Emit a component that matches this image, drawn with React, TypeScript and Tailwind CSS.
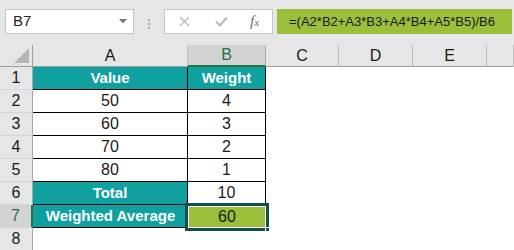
import React from 'react';

const COLS = ['A', 'B', 'C', 'D', 'E', ''];

type Cell = {
  text?: string;
  cls: string;
};

const TEAL = 'bg-[#10a0a0] text-white font-bold text-[15px]';
const PLAIN = 'bg-white text-[#1a1a1a] text-[16px]';

const rows: Cell[][] = [
  [
    { text: 'Value', cls: `${TEAL} border-r border-b border-black` },
    { text: 'Weight', cls: `${TEAL} border-r border-b border-black` },
  ],
  [
    { text: '50', cls: `${PLAIN} border-r border-b border-black` },
    { text: '4', cls: `${PLAIN} border-r border-b border-black` },
  ],
  [
    { text: '60', cls: `${PLAIN} border-r border-b border-black` },
    { text: '3', cls: `${PLAIN} border-r border-b border-black` },
  ],
  [
    { text: '70', cls: `${PLAIN} border-r border-b border-black` },
    { text: '2', cls: `${PLAIN} border-r border-b border-black` },
  ],
  [
    { text: '80', cls: `${PLAIN} border-r border-b border-black` },
    { text: '1', cls: `${PLAIN} border-r border-b border-black` },
  ],
  [
    { text: 'Total', cls: `${TEAL} border-r border-b border-black` },
    { text: '10', cls: `${PLAIN} border-r border-b border-black` },
  ],
  [
    { text: 'Weighted Average', cls: `${TEAL} border-b border-black` },
    { text: '60', cls: 'bg-[#9cbf3b] text-[#1a1a1a] text-[16px]' },
  ],
  [
    { cls: 'bg-white' },
    { cls: 'bg-white' },
  ],
];

function FormulaBar() {
  return (
    <div className="flex h-[45px] items-start bg-[#e6e6e6] pt-[9px]">
      <div className="ml-[5px] flex h-[25px] w-[129px] items-center justify-between border border-[#c6c6c6] bg-white pl-[7px] pr-[6px]">
        <span className="text-[15px] text-[#222]">B7</span>
        <svg width="8" height="5" viewBox="0 0 8 5">
          <path d="M0 0 L8 0 L4 4.5 Z" fill="#767676" />
        </svg>
      </div>
      <div className="ml-[14px] mt-[10px] flex flex-col gap-[2px]">
        <span className="h-[2px] w-[2px] bg-[#a8a8a8]" />
        <span className="h-[2px] w-[2px] bg-[#a8a8a8]" />
        <span className="h-[2px] w-[2px] bg-[#a8a8a8]" />
      </div>
      <div className="ml-[14px] flex h-[25px] w-[109px] items-center border border-[#c6c6c6] bg-white">
        <svg className="ml-[14px]" width="11" height="11" viewBox="0 0 11 11">
          <path d="M1 1 L10 10 M10 1 L1 10" stroke="#b8b8b8" strokeWidth="1.4" fill="none" />
        </svg>
        <svg className="ml-[25px]" width="13" height="11" viewBox="0 0 13 11">
          <path d="M1 5.5 L4.8 9.5 L12 1.5" stroke="#b8b8b8" strokeWidth="2" fill="none" />
        </svg>
        <span className="ml-[22px] font-['Liberation_Serif',serif] text-[15px] italic leading-none text-[#6e6e6e]">
          f<span className="text-[11px]">x</span>
        </span>
      </div>
      <div className="ml-[4px] mr-[2px] flex h-[25px] flex-1 items-center bg-[#9cbf3b] pl-[12px] text-[13px] text-[#1a1a1a]">
        =(A2*B2+A3*B3+A4*B4+A5*B5)/B6
      </div>
    </div>
  );
}

export default function App() {
  return (
    <div className="h-[250px] w-[514px] overflow-hidden bg-white font-['Liberation_Sans',Arial,sans-serif]">
      <FormulaBar />
      <div className="grid grid-cols-[33px_155px_78px_73px_74px_74px_1fr] grid-rows-[22px_repeat(8,23px)] bg-white">
        {/* corner */}
        <div className="relative border-r border-b border-[#9e9e9e] bg-[#e6e6e6]">
          <svg className="absolute right-[3px] bottom-[3px]" width="15" height="15" viewBox="0 0 15 15">
            <path d="M15 0 L15 15 L0 15 Z" fill="#b5b5b5" />
          </svg>
        </div>
        {COLS.map((c, i) => (
          <div
            key={`h${i}`}
            className={
              c === 'B'
                ? 'flex items-center justify-center border-r border-b-2 border-r-[#b0b0b0] border-b-[#217346] bg-[#d3d3d3] text-[16px] text-[#217346]'
                : 'flex items-center justify-center border-r border-b border-r-[#bdbdbd] border-b-[#9e9e9e] bg-[#e6e6e6] text-[16px] text-[#1a1a1a]'
            }
          >
            {c}
          </div>
        ))}

        {rows.map((r, ri) => (
          <React.Fragment key={`r${ri}`}>
            <div
              className={
                ri === 6
                  ? 'flex items-center justify-center border-r-2 border-b border-r-[#217346] border-b-[#d4d4d4] bg-[#d3d3d3] text-[16px] text-[#217346]'
                  : 'flex items-center justify-center border-r border-b border-r-[#a8a8a8] border-b-[#d4d4d4] bg-[#e6e6e6] text-[16px] text-[#1a1a1a]'
              }
            >
              {ri + 1}
            </div>
            {r.map((cell, ci) => (
              <div
                key={`c${ri}${ci}`}
                className={`relative flex items-center justify-center whitespace-nowrap ${cell.cls}`}
              >
                {ri === 6 && ci === 1 && (
                  <div className="pointer-events-none absolute -top-[2px] -right-[3px] -bottom-[3px] -left-[3px] z-10 border-[3px] border-[#134f4f]">
                    <div className="h-full w-full border border-white" />
                    <div className="absolute -right-[4px] -bottom-[4px] h-[5px] w-[5px] border border-white bg-[#134f4f]" />
                  </div>
                )}
                <span className="relative">{cell.text}</span>
              </div>
            ))}
            <div />
            <div />
            <div />
            <div />
          </React.Fragment>
        ))}
      </div>
    </div>
  );
}
